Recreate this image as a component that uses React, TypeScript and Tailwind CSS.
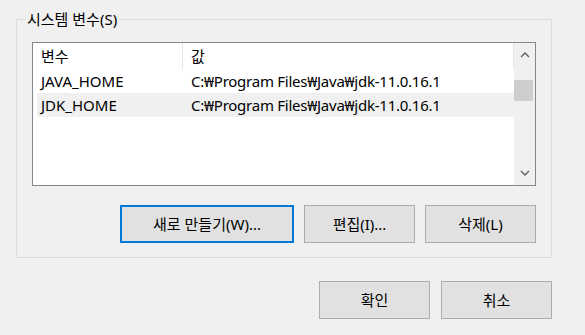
import type { ReactNode } from 'react';

const rows = [
  { name: 'JAVA_HOME', value: 'C:₩Program Files₩Java₩jdk-11.0.16.1' },
  { name: 'JDK_HOME', value: 'C:₩Program Files₩Java₩jdk-11.0.16.1' },
];

function WinButton({ children, width, focused }: { children: ReactNode; width: string; focused?: boolean }) {
  return (
    <button
      className={`${width} flex h-[38px] items-center justify-center bg-[#e1e1e1] text-[15px] text-black ${
        focused ? 'border-2 border-[#0078d7]' : 'border border-[#adadad]'
      }`}
    >
      {children}
    </button>
  );
}

function Chevron({ down }: { down?: boolean }) {
  return (
    <svg width="10" height="6" viewBox="0 0 10 6" className="block">
      <path
        d={down ? 'M1 1 L5 5 L9 1' : 'M1 5 L5 1 L9 5'}
        fill="none"
        stroke="#606060"
        strokeWidth="1.4"
      />
    </svg>
  );
}

export default function App() {
  return (
    <div
      className="h-[335px] w-[585px] overflow-hidden bg-[#f0f0f0] pl-[16px] pr-[33px] text-[15px] text-black"
      style={{ fontFamily: '"Noto Sans", "Noto Sans CJK KR", sans-serif' }}
    >
      <fieldset className="mt-[9px] border border-[#dcdcdc] px-[15px] pb-[14px] pt-0">
        <legend className="ml-[-7px] px-[2px] leading-[20px]">시스템 변수(S)</legend>

        <div className="mt-[13px] flex h-[144px] border border-[#828790] bg-white">
          <div className="flex-1">
            <div className="flex h-[26px] items-center border-r border-[#e5e5e5]">
              <div className="w-[150px] border-r border-[#e5e5e5] pl-[8px] leading-[26px]">변수</div>
              <div className="pl-[8px] leading-[26px]">값</div>
            </div>
            {rows.map((r, i) => (
              <div
                key={r.name}
                className={`ml-[4px] flex h-[24px] items-center ${i === 1 ? 'bg-[#f0f0f0]' : ''}`}
              >
                <div className="w-[146px] pl-[4px] whitespace-nowrap">{r.name}</div>
                <div className="pl-[8px] whitespace-nowrap tracking-[-0.25px]">{r.value}</div>
              </div>
            ))}
          </div>
          <div className="flex w-[21px] flex-col items-center bg-[#f0f0f0]">
            <div className="flex h-[24px] items-center justify-center">
              <Chevron />
            </div>
            <div className="mt-[13px] h-[21px] w-[19px] self-start bg-[#cdcdcd]" />
            <div className="flex-1" />
            <div className="flex h-[24px] items-center justify-center">
              <Chevron down />
            </div>
          </div>
        </div>

        <div className="mt-[19px] flex justify-end gap-[10px]">
          <WinButton width="w-[174px]" focused>
            새로 만들기(W)...
          </WinButton>
          <WinButton width="w-[111px]">편집(I)...</WinButton>
          <WinButton width="w-[111px]">삭제(L)</WinButton>
        </div>
      </fieldset>

      <div className="mt-[23px] flex justify-end gap-[11px]">
        <WinButton width="w-[111px]">확인</WinButton>
        <WinButton width="w-[111px]">취소</WinButton>
      </div>
    </div>
  );
}
